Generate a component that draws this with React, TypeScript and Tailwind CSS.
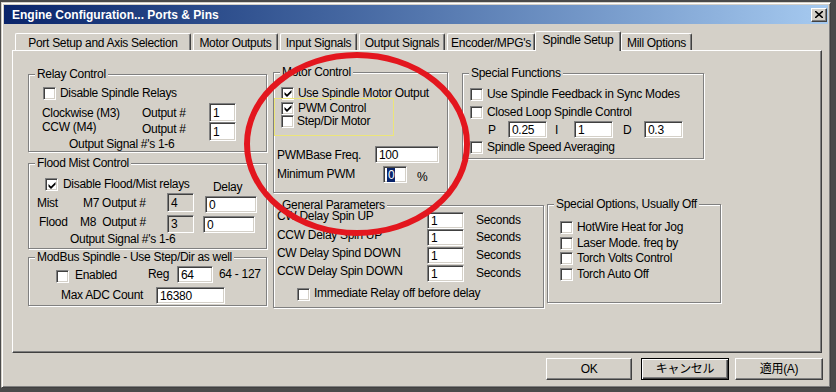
import type { ReactNode } from 'react'

function Check({ checked, className = '' }: { checked?: boolean; className?: string }) {
  return (
    <div
      className={`w-[13px] h-[13px] shrink-0 bg-white border border-t-[#808080] border-l-[#808080] border-r-white border-b-white shadow-[inset_1px_1px_0_#404040,inset_-1px_-1px_0_#d4d0c8] flex items-center justify-center ${className}`}
    >
      {checked && (
        <svg width="8" height="8" viewBox="0 0 8 8">
          <path d="M0.5 3L3 5.5L7.5 1V3.5L3 8L0.5 5.5Z" fill="#000" />
        </svg>
      )}
    </div>
  )
}

function Field({
  value,
  className = '',
  disabled,
  selected,
}: {
  value: string
  className?: string
  disabled?: boolean
  selected?: boolean
}) {
  return (
    <div
      className={`shrink-0 flex items-center pl-[3px] leading-none border border-t-[#808080] border-l-[#808080] border-r-white border-b-white shadow-[inset_1px_1px_0_#404040,inset_-1px_-1px_0_#d4d0c8] ${
        disabled ? 'bg-[#d4d0c8]' : 'bg-white'
      } ${className}`}
    >
      {selected ? <span className="bg-[#0a246a] text-white px-[1px] py-[1px]">{value}</span> : value}
    </div>
  )
}

function Group({ label, className = '', children }: { label: string; className?: string; children?: ReactNode }) {
  return (
    <fieldset
      className={`shrink-0 border border-[#808080] shadow-[1px_1px_0_#fff,inset_1px_1px_0_#fff] ${className}`}
    >
      <legend className="ml-[6px] px-[2px] leading-[14px] bg-[#d4d0c8]">{label}</legend>
      {children}
    </fieldset>
  )
}

function Row({ className = '', checked, gap = 'gap-[4px]', children }: { className?: string; checked?: boolean; gap?: string; children: ReactNode }) {
  return (
    <div className={`flex items-center ${gap} ${className}`}>
      <Check checked={checked} />
      <span className="whitespace-nowrap">{children}</span>
    </div>
  )
}

const tabs = [
  { label: 'Port Setup and Axis Selection', cls: 'w-[176px]' },
  { label: 'Motor Outputs', cls: 'w-[85px] ml-[2px]' },
  { label: 'Input Signals', cls: 'w-[77px] ml-[2px]' },
  { label: 'Output Signals', cls: 'w-[86px] ml-[2px]' },
  { label: "Encoder/MPG's", cls: 'w-[88px] ml-[2px]' },
  { label: 'Spindle Setup', cls: 'w-[86px]', active: true },
  { label: 'Mill Options', cls: 'w-[71px]' },
]

const delays = [
  { label: 'CW Delay Spin UP', row: 'h-[17px]', text: '-mt-[3px]' },
  { label: 'CCW Delay Spin UP', row: 'h-[18px]', text: '-mt-[1px]' },
  { label: 'CW Delay Spind DOWN', row: 'h-[18px]', text: '-mt-[1px]' },
  { label: 'CCW Delay Spin DOWN', row: 'h-[18px]', text: '-mt-[1px]' },
]

const btn =
  'h-[22px] flex items-center justify-center border border-t-white border-l-white border-r-[#404040] border-b-[#404040] shadow-[inset_-1px_-1px_0_#808080]'

export default function App() {
  return (
    <div className="relative w-[836px] h-[392px] overflow-hidden bg-[#4a4a4a] font-['Liberation_Sans',Arial,sans-serif] text-[12px] leading-[14px] tracking-[-0.3px] text-black">
      <div className="ml-[1px] mt-[2px] w-[830px] h-[386px] bg-[#d4d0c8] border border-t-[#d4d0c8] border-l-[#d4d0c8] border-r-[#404040] border-b-[#404040] shadow-[inset_1px_1px_0_#fff,inset_-1px_-1px_0_#808080] p-[2px]">
        {/* title bar */}
        <div className="h-[19px] flex items-center pl-[8px] bg-gradient-to-r from-[#0a246a] to-[#a6caf0]">
          <span className="text-white font-bold tracking-normal">Engine Configuration... Ports &amp; Pins</span>
          <div className="ml-auto mr-[1px] w-[16px] h-[14px] bg-[#d4d0c8] border border-t-white border-l-white border-r-[#404040] border-b-[#404040] shadow-[inset_-1px_-1px_0_#808080] flex items-center justify-center">
            <svg width="8" height="7" viewBox="0 0 8 7">
              <path d="M0 0L8 7M8 0L0 7" stroke="#000" strokeWidth="1.6" />
            </svg>
          </div>
        </div>

        {/* tabs */}
        <div className="ml-[11px] mt-[7px] h-[19px] flex items-end">
          {tabs.map(t => (
            <div
              key={t.label}
              className={`${t.cls} flex items-center justify-center whitespace-nowrap rounded-t-[2px] border-t border-l border-t-white border-l-white border-r border-r-[#404040] shadow-[inset_-1px_0_0_#808080] ${
                t.active ? 'h-[20px] -mb-[1px] pb-[3px] relative z-10 bg-[#d4d0c8]' : 'h-[17px] pt-[1px]'
              }`}
            >
              {t.label}
            </div>
          ))}
        </div>

        {/* panel */}
        <div className="ml-[8px] w-[810px] h-[303px] border border-t-white border-l-white border-r-[#404040] border-b-[#404040] shadow-[inset_-1px_-1px_0_#808080] pl-[15px] pt-[14px] flex items-start">
          {/* left column */}
          <div className="w-[239px] mt-[2px] flex flex-col">
            <Group label="Relay Control" className="h-[85px]">
              <Row className="ml-[14px] mt-[5px]">Disable Spindle Relays</Row>
              <div className="ml-[13px] mt-[3px] flex items-center h-[19px]">
                <span className="w-[100px]">Clockwise (M3)</span>
                <span className="w-[67px]">Output #</span>
                <Field className="w-[27px] h-[19px]" value="1" />
              </div>
              <div className="ml-[13px] flex items-start h-[19px]">
                <span className="w-[100px] -mt-[2px]">CCW (M4)</span>
                <span className="w-[67px]">Output #</span>
                <Field className="w-[27px] h-[19px]" value="1" />
              </div>
              <div className="ml-[40px] -mt-[4px]">Output Signal #'s 1-6</div>
            </Group>

            <Group label="Flood Mist Control" className="mt-[4px] h-[93px]">
              <div className="ml-[16px] mt-[7px] flex items-start">
                <Check checked className="mt-[1px]" />
                <span className="ml-[5px] w-[150px] whitespace-nowrap">Disable Flood/Mist relays</span>
                <span className="mt-[3px]">Delay</span>
              </div>
              <div className="ml-[8px] -mt-[1px] flex items-start">
                <span className="mt-[3px] w-[46px]">Mist</span>
                <span className="mt-[3px] w-[84px]">M7 Output #</span>
                <Field disabled className="w-[27px] h-[19px]" value="4" />
                <Field className="ml-[11px] mt-[3px] w-[52px] h-[17px]" value="0" />
              </div>
              <div className="ml-[10px] mt-[2px] flex items-start">
                <span className="w-[41px]">Flood</span>
                <span className="w-[87px] whitespace-pre">M8  Output #</span>
                <Field disabled className="w-[27px] h-[18px]" value="3" />
                <Field className="ml-[9px] mt-[1px] w-[52px] h-[17px]" value="0" />
              </div>
              <div className="ml-[41px] -mt-[1px]">Output Signal #'s 1-6</div>
            </Group>

            <Group label="ModBus Spindle - Use Step/Dir as well" className="mt-[1px] h-[56px]">
              <div className="ml-[27px] mt-[2px] flex items-start">
                <Check className="mt-[4px]" />
                <span className="ml-[6px] mt-[2px] w-[73px]">Enabled</span>
                <span className="mt-[1px] w-[29px]">Reg</span>
                <Field className="w-[36px] h-[17px]" value="64" />
                <span className="ml-[6px] mt-[1px] whitespace-nowrap">64 - 127</span>
              </div>
              <div className="ml-[32px] mt-[4px] flex items-start">
                <span className="mt-[1px] w-[95px]">Max ADC Count</span>
                <Field className="w-[69px] h-[17px]" value="16380" />
              </div>
            </Group>
          </div>

          {/* right area */}
          <div className="ml-[6px] flex flex-col">
            <div className="flex items-start">
              <Group label="Motor Control" className="w-[175px] h-[128px]">
                <Row checked className="ml-[7px] mt-[7px]">Use Spindle Motor Output</Row>
                <Row checked className="ml-[7px] mt-[1px]">PWM Control</Row>
                <Row gap="gap-[3px]" className="ml-[7px] -mt-[1px]">Step/Dir Motor</Row>
                <div className="ml-[3px] mt-[18px] flex items-center">
                  <span className="w-[98px]">PWMBase Freq.</span>
                  <Field className="w-[64px] h-[17px]" value="100" />
                </div>
                <div className="ml-[3px] mt-[3px] flex items-start">
                  <span className="w-[106px] mt-[1px]">Minimum PWM</span>
                  <Field selected className="w-[24px] h-[17px]" value="0" />
                  <span className="ml-[10px] mt-[4px]">%</span>
                </div>
              </Group>

              <Group label="Special Functions" className="ml-[14px] mt-[1px] w-[242px] h-[93px]">
                <Row className="ml-[7px] mt-[7px]">Use Spindle Feedback in Sync Modes</Row>
                <Row className="ml-[7px] mt-[4px]">Closed Loop Spindle Control</Row>
                <div className="ml-[25px] mt-[2px] flex items-center">
                  <span className="w-[20px]">P</span>
                  <Field className="w-[39px] h-[17px]" value="0.25" />
                  <span className="ml-[8px] w-[19px]">I</span>
                  <Field className="w-[39px] h-[17px]" value="1" />
                  <span className="ml-[10px] w-[21px]">D</span>
                  <Field className="w-[39px] h-[17px]" value="0.3" />
                </div>
                <Row className="ml-[7px] mt-[2px]">Spindle Speed Averaging</Row>
              </Group>
            </div>

            <div className="mt-[4px] flex items-start">
              <Group label="General Parameters" className="mt-[1px] w-[271px] h-[110px]">
                {delays.map(d => (
                  <div key={d.label} className={`ml-[3px] flex items-start ${d.row}`}>
                    <span className={`w-[150px] whitespace-nowrap ${d.text}`}>{d.label}</span>
                    <Field className="w-[37px] h-[17px]" value="1" />
                    <span className="ml-[12px] mt-[1px]">Seconds</span>
                  </div>
                ))}
                <div className="ml-[23px] mt-[5px] flex items-start gap-[4px]">
                  <Check />
                  <span className="-mt-[2px] whitespace-nowrap">Immediate Relay off before delay</span>
                </div>
              </Group>

              <Group label="Special Options, Usually Off" className="ml-[3px] w-[174px] h-[106px]">
                <Row className="ml-[12px] mt-[9px]">HotWire Heat for Jog</Row>
                <Row className="ml-[12px] mt-[2px]">Laser Mode. freq by</Row>
                <Row className="ml-[12px] mt-[1px]">Torch Volts Control</Row>
                <Row className="ml-[12px] mt-[2px]">Torch Auto Off</Row>
              </Group>
            </div>
          </div>
        </div>

        {/* buttons */}
        <div className="mt-[5px] flex font-['Liberation_Sans','Noto_Sans_CJK_JP',sans-serif]">
          <div className={`${btn} ml-[542px] w-[86px]`}>OK</div>
          <div className="ml-[9px] w-[88px] h-[22px] flex items-center justify-center border border-black shadow-[inset_1px_1px_0_#fff,inset_-1px_-1px_0_#404040,inset_-2px_-2px_0_#808080]">
            キャンセル
          </div>
          <div className={`${btn} ml-[6px] w-[88px]`}>適用(A)</div>
        </div>
      </div>

      {/* annotation drawn over the screenshot */}
      <svg className="absolute inset-0 pointer-events-none" width="836" height="392">
        <rect x="274.5" y="98.5" width="119" height="37" fill="none" stroke="#ece57a" strokeWidth="1" />
        <ellipse cx="357" cy="144" rx="110" ry="89" fill="none" stroke="#e3161e" strokeWidth="6" />
      </svg>
    </div>
  )
}
